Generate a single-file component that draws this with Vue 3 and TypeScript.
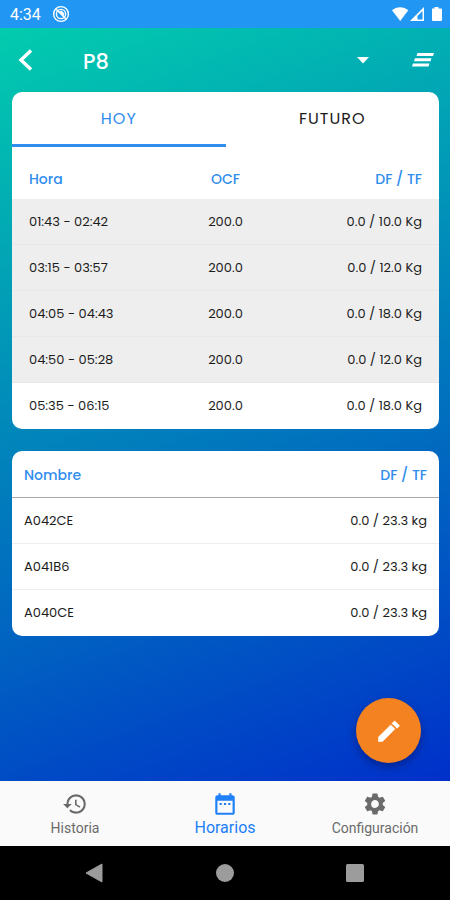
<script setup lang="ts">
import { ref } from 'vue'

interface Slot { time: string; ocf: string; feed: string; past: boolean }
interface Feeder { name: string; feed: string }

const tabs = ['Hoy', 'Futuro']
const activeTab = ref(0)

const slots: Slot[] = [
  { time: '01:43 - 02:42', ocf: '200.0', feed: '0.0 / 10.0 Kg', past: true },
  { time: '03:15 - 03:57', ocf: '200.0', feed: '0.0 / 12.0 Kg', past: true },
  { time: '04:05 - 04:43', ocf: '200.0', feed: '0.0 / 18.0 Kg', past: true },
  { time: '04:50 - 05:28', ocf: '200.0', feed: '0.0 / 12.0 Kg', past: true },
  { time: '05:35 - 06:15', ocf: '200.0', feed: '0.0 / 18.0 Kg', past: false },
]

const feeders: Feeder[] = [
  { name: 'A042CE', feed: '0.0 / 23.3 kg' },
  { name: 'A041B6', feed: '0.0 / 23.3 kg' },
  { name: 'A040CE', feed: '0.0 / 23.3 kg' },
]
</script>

<template>
  <div class="screen">
    <div class="status">
      <span class="clock">4:34</span>
      <svg class="status-badge" viewBox="0 0 18 18" aria-hidden="true">
        <circle cx="9" cy="9" r="7.4" fill="none" stroke="currentColor" stroke-width="1.4" />
        <circle cx="9" cy="9" r="4.6" fill="none" stroke="currentColor" stroke-width="1.4" />
        <path d="M7 6.2a3.6 3.6 0 0 1 4.8 4.8z" fill="currentColor" />
        <path d="M4.2 4.2l9.6 9.6" stroke="currentColor" stroke-width="1.5" />
      </svg>
      <svg class="status-signals" viewBox="0 0 52 16" aria-hidden="true">
        <path d="M2 4.3C6.600.2 13.600.2 18.300 4.300L10.200 15z" fill="currentColor" />
        <path d="M34 1v14H20z" fill="currentColor" />
        <path d="M32.500 5v8.500h-5V10z" fill="#2196f3" />
        <path d="M42 2.500h2.500V1h4v1.500H51q1 0 1 1V14q0 1-1 1h-8q-1 0-1-1z" fill="currentColor" />
      </svg>
    </div>

    <main class="content">
      <header class="bar">
        <button class="icon-button" type="button" aria-label="Atrás">
          <svg class="back" viewBox="0 0 16 24"><path d="M13 2.500L3 12l10 9.500" fill="none" stroke="currentColor" stroke-width="3.4" /></svg>
        </button>
        <h1 class="title">P8</h1>
        <button class="icon-button" type="button" aria-label="Elegir">
          <svg class="caret" viewBox="0 0 12 7"><path d="M0 0h12L6 6.500z" fill="currentColor" /></svg>
        </button>
        <button class="icon-button" type="button" aria-label="Menú">
          <svg class="lines" viewBox="0 0 22 14"><path d="M5.500 0H22l-1 3H4.500zM3 5.200h16.500l-1 3H2zM1 10.400h16.500l-1 3H0z" fill="currentColor" /></svg>
        </button>
      </header>

      <section class="card">
        <div class="tabs" role="tablist">
          <button
            v-for="(tab, i) in tabs"
            :key="tab"
            class="tab"
            :class="{ active: i === activeTab }"
            type="button"
            role="tab"
            :aria-selected="i === activeTab"
            @click="activeTab = i"
          >{{ tab }}</button>
        </div>
        <table class="schedule">
          <thead>
            <tr><th>Hora</th><th>OCF</th><th>DF / TF</th></tr>
          </thead>
          <tbody>
            <tr v-for="slot in slots" :key="slot.time" :class="{ past: slot.past }">
              <td>{{ slot.time }}</td>
              <td>{{ slot.ocf }}</td>
              <td>{{ slot.feed }}</td>
            </tr>
          </tbody>
        </table>
      </section>

      <section class="card">
        <table class="feeders">
          <thead>
            <tr><th>Nombre</th><th>DF / TF</th></tr>
          </thead>
          <tbody>
            <tr v-for="feeder in feeders" :key="feeder.name">
              <td>{{ feeder.name }}</td>
              <td>{{ feeder.feed }}</td>
            </tr>
          </tbody>
        </table>
      </section>

      <button class="fab" type="button" aria-label="Editar">
        <svg viewBox="0 0 26 26"><path d="M2.500 23.500V19L14.700 6.900l4.200 4.200L6.500 23.500zM16 5.400l1.900-2q.7-.7 1.400 0l3.700 3.600q.7.700 0 1.400l-1.900 1.900z" fill="currentColor" stroke="currentColor" stroke-width=".6" stroke-linejoin="round" /></svg>
      </button>
    </main>

    <nav class="bottom">
      <a class="item" href="#historia">
        <svg viewBox="0 0 24 24"><path d="M13 3a9 9 0 0 0-9 9H1l3.890 3.890.07.14L9 12H6c0-3.870 3.130-7 7-7s7 3.130 7 7-3.130 7-7 7c-1.930 0-3.680-.79-4.940-2.060l-1.420 1.420A8.954 8.954 0 0 0 13 21a9 9 0 0 0 0-18zm-1 5v5l4.280 2.540.72-1.210-3.500-2.080V8z" fill="currentColor" /></svg>
        <span>Historia</span>
      </a>
      <a class="item current" href="#horarios">
        <svg viewBox="0 0 24 24"><path d="M9 11H7v2h2zm4 0h-2v2h2zm4 0h-2v2h2zm2-7h-1V2h-2v2H8V2H6v2H5c-1.110 0-1.990.9-1.990 2L3 20a2 2 0 0 0 2 2h14c1.100 0 2-.9 2-2V6c0-1.100-.9-2-2-2zm0 16H5V9h14z" fill="currentColor" /></svg>
        <span>Horarios</span>
      </a>
      <a class="item" href="#configuracion">
        <svg viewBox="0 0 24 24"><path d="M19.140 12.940c.04-.3.06-.61.06-.94 0-.32-.02-.64-.07-.94l2.030-1.580a.49.49 0 0 0 .12-.61l-1.920-3.320a.488.488 0 0 0-.59-.22l-2.390.96c-.5-.38-1.030-.7-1.620-.94l-.36-2.540a.484.484 0 0 0-.48-.41h-3.840c-.24 0-.43.17-.47.41l-.36 2.540c-.59.24-1.130.57-1.620.94l-2.390-.96c-.22-.08-.47 0-.59.22L2.740 8.870c-.12.21-.08.47.12.61l2.030 1.580c-.05.3-.09.63-.09.94s.02.64.07.94l-2.030 1.580a.49.49 0 0 0-.12.61l1.920 3.320c.12.22.37.29.59.22l2.390-.96c.5.38 1.030.7 1.620.94l.36 2.540c.05.24.24.41.48.41h3.840c.24 0 .44-.17.47-.41l.36-2.540c.59-.24 1.130-.56 1.620-.94l2.390.96c.22.08.47 0 .59-.22l1.920-3.320c.12-.22.07-.47-.12-.61zM12 15.600A3.610 3.610 0 0 1 8.400 12c0-1.980 1.620-3.600 3.600-3.600s3.600 1.620 3.600 3.600-1.620 3.600-3.600 3.600z" fill="currentColor" /></svg>
        <span>Configuración</span>
      </a>
    </nav>

    <div class="system">
      <svg viewBox="0 0 20 20" aria-hidden="true"><path d="M17 1v18L1 10z" fill="currentColor" stroke="currentColor" stroke-linejoin="round" /></svg>
      <svg viewBox="0 0 20 20" aria-hidden="true"><circle cx="10" cy="10" r="9" fill="currentColor" /></svg>
      <svg viewBox="0 0 20 20" aria-hidden="true"><rect x="1" y="1" width="18" height="18" rx="1.500" fill="currentColor" /></svg>
    </div>
  </div>
</template>

<style>
body {
  margin: 0;
}
</style>

<style scoped>
.screen {
  display: flex;
  flex-direction: column;
  min-height: 100vh;
  font-family: Poppins, Inter, "Noto Sans", sans-serif;
  font-size: 13px;
  color: #1c1c1c;
}
button {
  margin: 0;
  padding: 0;
  border: 0;
  background: none;
  color: inherit;
  font: inherit;
  cursor: pointer;
}
svg {
  display: block;
}
.status {
  display: flex;
  align-items: center;
  height: 28px;
  padding: 0 8px 0 10px;
  background: #2196f3;
  color: #fff;
}
.clock {
  font-family: Roboto, sans-serif;
  font-size: 16px;
}
.status-badge {
  width: 18px;
  height: 18px;
  margin-left: 11px;
}
.status-signals {
  width: 52px;
  height: 16px;
  margin-left: auto;
}
.content {
  position: relative;
  display: flex;
  flex: 1;
  flex-direction: column;
  gap: 22px;
  padding: 0 11px 0 12px;
  background: linear-gradient(160deg, #02ccae, #0030ca);
}
.bar {
  display: flex;
  align-items: center;
  height: 64px;
  margin-bottom: -22px;
  padding-right: 2px;
  color: #fff;
}
.icon-button {
  display: flex;
  align-items: center;
  justify-content: center;
  width: 28px;
  height: 40px;
}
.back {
  width: 16px;
  height: 24px;
}
.title {
  flex: 1;
  margin: 0 0 0 43px;
  padding-top: 4px;
  font-size: 21px;
  font-weight: 500;
  line-height: 32px;
}
.caret {
  width: 12px;
  height: 7px;
}
.lines {
  width: 22px;
  height: 14px;
}
.icon-button + .icon-button {
  margin-left: 32px;
}
.card {
  overflow: hidden;
  border-radius: 10px;
  background: #fff;
}
.tabs {
  display: flex;
}
.tab {
  flex: 1;
  height: 55px;
  border-bottom: 3px solid transparent;
  font-size: 16px;
  letter-spacing: 1px;
  text-transform: uppercase;
}
.tab.active {
  border-color: #2f8ded;
  color: #2f8ded;
}
table {
  width: 100%;
  border-collapse: separate;
  border-spacing: 0;
  table-layout: fixed;
}
th,
td {
  box-sizing: border-box;
  height: 46px;
  padding: 0 12px;
  text-align: left;
  white-space: nowrap;
}
th {
  color: #2f8ded;
  font-size: 14px;
  font-weight: 500;
}
th:last-child,
td:last-child {
  text-align: right;
}
.schedule th,
.schedule td {
  padding: 0 17px;
}
.schedule th {
  height: 52px;
  padding-top: 12px;
}
.schedule th:nth-child(2),
.schedule td:nth-child(2) {
  text-align: center;
}
.past td {
  border-bottom: 1px solid #e8e8e8;
  background: #eee;
}
.feeders th {
  height: 47px;
  padding-top: 2px;
  border-bottom: 1px solid #aaa;
}
.feeders tbody tr:not(:last-child) td {
  border-bottom: 1px solid #eee;
}
.fab {
  position: absolute;
  right: 29px;
  bottom: 18px;
  display: flex;
  align-items: center;
  justify-content: center;
  width: 65px;
  height: 65px;
  border-radius: 50%;
  background: #f58220;
  box-shadow: 0 4px 8px rgba(0, 0, 40, 0.35);
  color: #fff;
}
.fab svg {
  width: 26px;
  height: 26px;
}
.bottom {
  display: flex;
  height: 65px;
  background: #fafafa;
}
.item {
  display: flex;
  flex: 1;
  flex-direction: column;
  align-items: center;
  justify-content: center;
  gap: 1px;
  padding-top: 2px;
  color: #6b6b6b;
  font-family: Roboto, sans-serif;
  font-size: 14px;
  line-height: 20px;
  text-decoration: none;
}
.item svg {
  width: 26px;
  height: 26px;
}
.item.current {
  color: #2080f8;
  font-size: 16px;
}
.system {
  display: flex;
  align-items: center;
  justify-content: space-between;
  height: 54px;
  padding: 0 85px;
  background: #000;
  color: #9c9c9c;
}
.system svg {
  width: 20px;
  height: 20px;
}
</style>
